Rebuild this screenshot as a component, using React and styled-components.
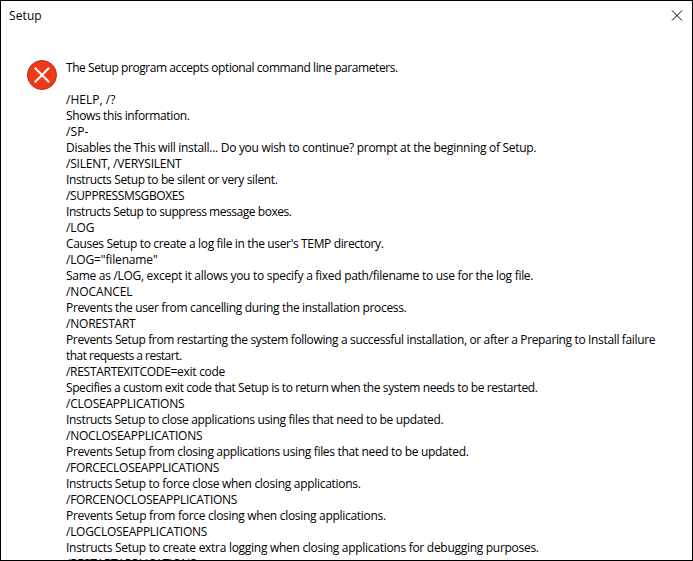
import React from "react";
import styled, { createGlobalStyle } from "styled-components";

const GlobalStyle = createGlobalStyle`
  body { margin: 0; background: #fff; }
  * { box-sizing: border-box; }
`;

const Dialog = styled.main`
  display: flex;
  flex-direction: column;
  width: 693px;
  height: 561px;
  overflow: hidden;
  border: 1px solid #000;
  background: #fff;
  color: #000;
  font: 12px/16px "Open Sans", "Noto Sans", sans-serif;
`;

const TitleBar = styled.header`
  display: flex;
  flex: none;
  justify-content: space-between;
  height: 58px;
  padding: 7px 9px 0 8px;
`;

const Title = styled.h1`
  margin: 0;
  font-size: 12px;
  font-weight: 400;
  letter-spacing: 0.1px;
`;

const CloseButton = styled.button`
  display: block;
  width: 12px;
  height: 12px;
  margin-top: 1px;
  padding: 0;
  border: 0;
  background: none;

  svg { display: block; }
`;

const Body = styled.div`
  display: flex;
  align-items: flex-start;
  gap: 8px;
  padding-left: 25px;
`;

const ErrorIcon = styled.svg`
  flex: none;
  width: 32px;
  height: 32px;
`;

const Message = styled.div`
  display: flex;
  flex-direction: column;
  padding-top: 1px;
`;

const Line = styled.div`
  height: 16px;
  white-space: pre;
  letter-spacing: ${(p) => p.$tracking}px;
`;

const lines = [
  ["The Setup program accepts optional command line parameters.", -0.425],
  ["", 0],
  ["/HELP, /?", 0.033],
  ["Shows this information.", -0.376],
  ["/SP-", 0.11],
  ["Disables the This will install... Do you wish to continue? prompt at the beginning of Setup.", -0.29],
  ["/SILENT, /VERYSILENT", -0.224],
  ["Instructs Setup to be silent or very silent.", -0.367],
  ["/SUPPRESSMSGBOXES", -0.38],
  ["Instructs Setup to suppress message boxes.", -0.455],
  ["/LOG", -0.056],
  ["Causes Setup to create a log file in the user's TEMP directory.", -0.351],
  ['/LOG="filename"', -0.157],
  ["Same as /LOG, except it allows you to specify a fixed path/filename to use for the log file.", -0.29],
  ["/NOCANCEL", -0.105],
  ["Prevents the user from cancelling during the installation process.", -0.336],
  ["/NORESTART", -0.214],
  ["Prevents Setup from restarting the system following a successful installation, or after a Preparing to Install failure", -0.354],
  ["that requests a restart.", -0.522],
  ["/RESTARTEXITCODE=exit code", -0.285],
  ["Specifies a custom exit code that Setup is to return when the system needs to be restarted.", -0.4],
  ["/CLOSEAPPLICATIONS", -0.23],
  ["Instructs Setup to close applications using files that need to be updated.", -0.33],
  ["/NOCLOSEAPPLICATIONS", -0.225],
  ["Prevents Setup from closing applications using files that need to be updated.", -0.33],
  ["/FORCECLOSEAPPLICATIONS", -0.285],
  ["Instructs Setup to force close when closing applications.", -0.296],
  ["/FORCENOCLOSEAPPLICATIONS", -0.275],
  ["Prevents Setup from force closing when closing applications.", -0.295],
  ["/LOGCLOSEAPPLICATIONS", -0.275],
  ["Instructs Setup to create extra logging when closing applications for debugging purposes.", -0.285],
  ["/RESTARTAPPLICATIONS", -0.225],
];

export default function App() {
  return (
    <>
      <GlobalStyle />
      <Dialog>
        <TitleBar>
          <Title>Setup</Title>
          <CloseButton aria-label="Close">
            <svg width="12" height="12" viewBox="0 0 12 12">
              <path d="M1 1.5 11 11.5M11 1.5 1 11.5" stroke="#000" strokeWidth="1" fill="none" />
            </svg>
          </CloseButton>
        </TitleBar>
        <Body>
          <ErrorIcon viewBox="0 0 32 32">
            <circle cx="16" cy="16" r="14.5" fill="#f03a17" stroke="#a93420" strokeWidth="1" />
            <path d="M8.8 8.8 23.2 23.2M23.2 8.8 8.8 23.2" stroke="#fff" strokeWidth="2.1" fill="none" />
          </ErrorIcon>
          <Message>
            {lines.map(([text, tracking], i) => (
              <Line key={i} $tracking={tracking}>{text}</Line>
            ))}
          </Message>
        </Body>
      </Dialog>
    </>
  );
}
